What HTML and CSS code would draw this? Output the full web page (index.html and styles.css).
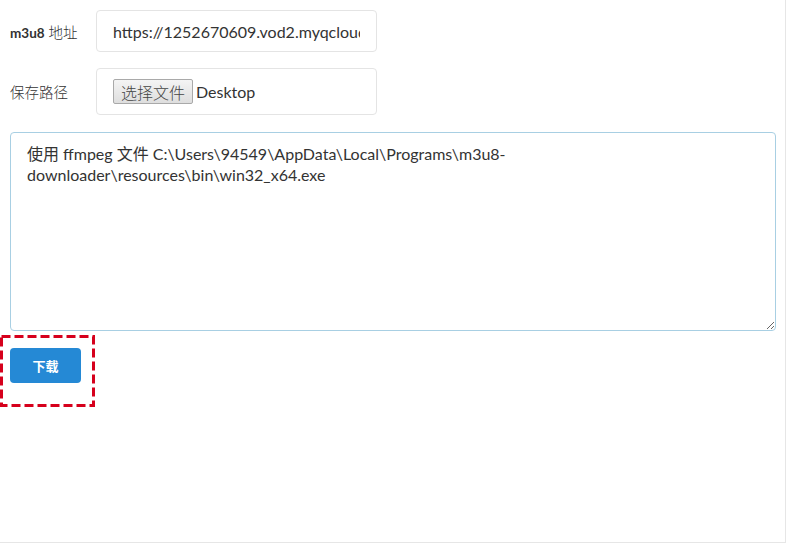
FILE: index.html
```html
<!DOCTYPE html>
<html lang="zh-CN">
<head>
    <meta charset="UTF-8">
    <title>m3u8 downloader</title>
    <link rel="stylesheet" href="styles.css">
</head>
<body>
    <div class="page">
        <div class="form-row row-url">
            <label class="form-label" for="url"><b class="label-en">m3u8</b> 地址</label>
            <input class="form-input" id="url" type="text" value="https://1252670609.vod2.myqcloud.com/abc/index.m3u8">
        </div>

        <div class="form-row row-path">
            <label class="form-label">保存路径</label>
            <div class="form-input file-box">
                <button class="file-btn" type="button">选择文件</button>
                <span class="file-name">Desktop</span>
            </div>
        </div>

        <textarea class="log" readonly>使用 ffmpeg 文件 C:\Users\94549\AppData\Local\Programs\m3u8-downloader\resources\bin\win32_x64.exe</textarea>

        <div class="actions">
            <button class="btn-download" type="button">下载</button>
            <!-- annotation box around the button -->
            <svg class="mark" width="96" height="72" viewBox="0 0 96 72">
                <rect x="1.5" y="1.5" width="92" height="69" fill="none" stroke="#d6001c" stroke-width="3" stroke-dasharray="9 4"/>
            </svg>
        </div>
    </div>
</body>
</html>
```

FILE: styles.css
```css
html, body {
    margin: 0;
    height: 100%;
    background: #fff;
}
body {
    font-family: Lato, "Noto Sans CJK SC", sans-serif;
    color: #333;
}
.page {
    box-sizing: border-box;
    width: 786px;
    height: 543px;
    padding: 10px;
    border-right: 1px solid #e6e6e6;
    border-bottom: 1px solid #e6e6e6;
}
.form-row {
    display: flex;
    align-items: center;
}
.row-path {
    margin-top: 16px;
}
.form-label {
    width: 86px;
    font-family: Lato, "Noto Sans CJK SC", sans-serif;
    font-size: 14.5px;
    font-weight: 300;
    color: #333;
}
.label-en {
    font-size: 13.5px;
    font-weight: bold;
}
.form-input {
    box-sizing: border-box;
    width: 281px;
    height: 42px;
    padding: 0 16px;
    border: 1px solid #e4e4e4;
    border-radius: 4px;
    font-family: Lato, "Noto Sans CJK SC", sans-serif;
    font-size: 16px;
    color: #333;
    outline: none;
}
.file-box {
    display: flex;
    align-items: center;
    height: 47px;
}
.file-btn {
    height: 25px;
    padding: 0 7px;
    border: 1px solid #a9a9a9;
    border-radius: 2px;
    background: linear-gradient(#f4f4f4, #dedede);
    font-family: "Noto Sans CJK SC", sans-serif;
    font-size: 16px;
    font-weight: 300;
    color: #444;
    line-height: 20px;
}
.file-name {
    margin-left: 3px;
    font-size: 16px;
}
.log {
    display: block;
    box-sizing: border-box;
    width: 766px;
    height: 199px;
    margin-top: 17px;
    padding: 10px 16px;
    border: 1px solid #a8cfe3;
    border-radius: 4px;
    font-family: Lato, "Noto Sans CJK SC", sans-serif;
    font-size: 16px;
    line-height: 21px;
    color: #333;
    outline: none;
}
.actions {
    position: relative;
    margin-top: 17px;
}
.btn-download {
    width: 71px;
    height: 35px;
    border: none;
    border-radius: 4px;
    background: #2589d5;
    color: #fff;
    font-family: "Noto Sans CJK SC", sans-serif;
    font-size: 13px;
    font-weight: bold;
}
.mark {
    position: absolute;
    left: -10px;
    top: -13px;
}
```
